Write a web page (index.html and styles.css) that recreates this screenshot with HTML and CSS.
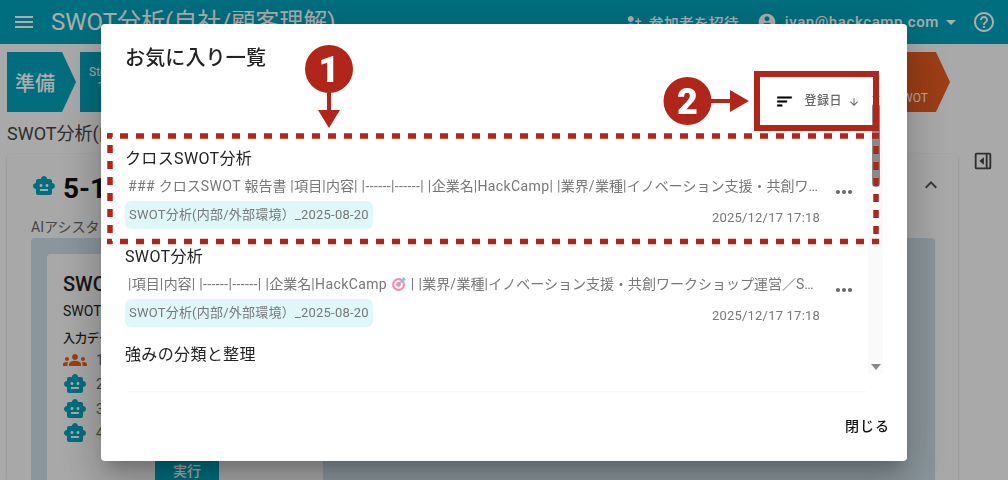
FILE: index.html
```html
<!DOCTYPE html>
<html lang="ja">
<head>
<meta charset="utf-8">
<title>お気に入り一覧</title>
<link rel="stylesheet" href="styles.css">
</head>
<body>
<div class="app">
  <header class="topbar">
    <svg class="ico menu-ico" viewBox="0 0 24 24"><path d="M3 18h18v-2H3v2zm0-5h18v-2H3v2zm0-7v2h18V6H3z"/></svg>
    <div class="app-title">SWOT分析(自社/顧客理解)</div>
    <div class="top-actions">
      <svg class="ico small-ico" viewBox="0 0 24 24"><path d="M15 12c2.21 0 4-1.79 4-4s-1.79-4-4-4-4 1.79-4 4 1.79 4 4 4zm-9-2V7H4v3H1v2h3v3h2v-3h3v-2H6zm9 4c-2.67 0-8 1.34-8 4v2h16v-2c0-2.66-5.33-4-8-4z"/></svg>
      <span class="invite">参加者を招待</span>
      <svg class="ico acct-ico" viewBox="0 0 24 24"><path d="M12 2C6.48 2 2 6.48 2 12s4.48 10 10 10 10-4.48 10-10S17.52 2 12 2zm0 3c1.66 0 3 1.34 3 3s-1.34 3-3 3-3-1.34-3-3 1.34-3 3-3zm0 14.2c-2.5 0-4.71-1.28-6-3.22.03-1.99 4-3.08 6-3.08 1.99 0 5.97 1.09 6 3.08-1.29 1.94-3.5 3.22-6 3.22z"/></svg>
      <span class="email">ivan@hackcamp.com</span>
      <svg class="ico caret-ico" viewBox="0 0 24 24"><path d="M7 10l5 5 5-5z"/></svg>
      <svg class="ico help-ico" viewBox="0 0 24 24"><path d="M11 18h2v-2h-2v2zm1-16C6.48 2 2 6.48 2 12s4.48 10 10 10 10-4.48 10-10S17.52 2 12 2zm0 18c-4.41 0-8-3.59-8-8s3.59-8 8-8 8 3.59 8 8-3.59 8-8 8zm0-14c-2.21 0-4 1.79-4 4h2c0-1.1.9-2 2-2s2 .9 2 2c0 2-3 1.75-3 5h2c0-2.25 3-2.5 3-5 0-2.21-1.79-4-4-4z"/></svg>
    </div>
  </header>

  <nav class="stepper">
    <div class="step step-first">準備</div>
    <div class="step step-mid"><span class="step-kicker">Step</span><span class="step-num">1</span></div>
    <div class="step step-last"><span class="step-label">SWOT</span></div>
  </nav>

  <div class="workspace">
    <div class="main-col">
      <div class="page-heading">SWOT分析(内部/外部環境)</div>
      <section class="card">
        <div class="card-head">
          <svg class="ico robot head-robot" viewBox="0 0 24 24"><path d="M20 9V7c0-1.1-.9-2-2-2h-3c0-1.66-1.34-3-3-3S9 3.34 9 5H6c-1.1 0-2 .9-2 2v2c-1.66 0-3 1.34-3 3s1.34 3 3 3v4c0 1.1.9 2 2 2h12c1.1 0 2-.9 2-2v-4c1.66 0 3-1.34 3-3s-1.34-3-3-3zM7.5 11.5c0-.83.67-1.5 1.5-1.5s1.5.67 1.5 1.5S9.83 13 9 13s-1.5-.67-1.5-1.5zM16 17H8v-2h8v2zm-1-4c-.83 0-1.5-.67-1.5-1.5S14.17 10 15 10s1.5.67 1.5 1.5S15.83 13 15 13z"/></svg>
          <div class="card-title">5-1 SWOT分析</div>
          <svg class="ico chevron" viewBox="0 0 24 24"><path d="M12 8l-6 6 1.41 1.41L12 10.83l4.59 4.58L18 14z"/></svg>
        </div>
        <div class="assistant-note">AIアシスタント</div>
        <div class="tool-panel">
          <div class="tool-card">
            <div class="tool-title">SWOT分析</div>
            <div class="tool-desc">SWOT分析を実施</div>
            <div class="input-label">入力データ</div>
            <div class="input-rows">
              <div class="input-row"><svg class="ico people" viewBox="0 0 24 24"><path d="M4 13c1.1 0 2-.9 2-2s-.9-2-2-2-2 .9-2 2 .9 2 2 2zm1.13 1.1c-.37-.06-.74-.1-1.13-.1-.99 0-1.93.21-2.78.58C.48 14.9 0 15.62 0 16.43V18h4.5v-1.61c0-.83.23-1.61.63-2.29zM20 13c1.1 0 2-.9 2-2s-.9-2-2-2-2 .9-2 2 .9 2 2 2zm4 3.43c0-.81-.48-1.53-1.22-1.85-.85-.37-1.79-.58-2.78-.58-.39 0-.76.04-1.13.1.4.68.63 1.46.63 2.29V18H24v-1.57zm-7.76-2.78c-1.17-.52-2.61-.9-4.24-.9-1.63 0-3.07.39-4.24.9C6.68 14.13 6 15.21 6 16.39V18h12v-1.61c0-1.18-.68-2.26-1.76-2.74zM12 12c1.66 0 3-1.34 3-3s-1.34-3-3-3-3 1.34-3 3 1.34 3 3 3z"/></svg><span>1</span></div>
              <div class="input-row"><svg class="ico robot" viewBox="0 0 24 24"><path d="M20 9V7c0-1.1-.9-2-2-2h-3c0-1.66-1.34-3-3-3S9 3.34 9 5H6c-1.1 0-2 .9-2 2v2c-1.66 0-3 1.34-3 3s1.34 3 3 3v4c0 1.1.9 2 2 2h12c1.1 0 2-.9 2-2v-4c1.66 0 3-1.34 3-3s-1.34-3-3-3zM7.5 11.5c0-.83.67-1.5 1.5-1.5s1.5.67 1.5 1.5S9.83 13 9 13s-1.5-.67-1.5-1.5zM16 17H8v-2h8v2zm-1-4c-.83 0-1.5-.67-1.5-1.5S14.17 10 15 10s1.5.67 1.5 1.5S15.83 13 15 13z"/></svg><span>2</span></div>
              <div class="input-row"><svg class="ico robot" viewBox="0 0 24 24"><path d="M20 9V7c0-1.1-.9-2-2-2h-3c0-1.66-1.34-3-3-3S9 3.34 9 5H6c-1.1 0-2 .9-2 2v2c-1.66 0-3 1.34-3 3s1.34 3 3 3v4c0 1.1.9 2 2 2h12c1.1 0 2-.9 2-2v-4c1.66 0 3-1.34 3-3s-1.34-3-3-3zM7.5 11.5c0-.83.67-1.5 1.5-1.5s1.5.67 1.5 1.5S9.83 13 9 13s-1.5-.67-1.5-1.5zM16 17H8v-2h8v2zm-1-4c-.83 0-1.5-.67-1.5-1.5S14.17 10 15 10s1.5.67 1.5 1.5S15.83 13 15 13z"/></svg><span>3</span></div>
              <div class="input-row"><svg class="ico robot" viewBox="0 0 24 24"><path d="M20 9V7c0-1.1-.9-2-2-2h-3c0-1.66-1.34-3-3-3S9 3.34 9 5H6c-1.1 0-2 .9-2 2v2c-1.66 0-3 1.34-3 3s1.34 3 3 3v4c0 1.1.9 2 2 2h12c1.1 0 2-.9 2-2v-4c1.66 0 3-1.34 3-3s-1.34-3-3-3zM7.5 11.5c0-.83.67-1.5 1.5-1.5s1.5.67 1.5 1.5S9.83 13 9 13s-1.5-.67-1.5-1.5zM16 17H8v-2h8v2zm-1-4c-.83 0-1.5-.67-1.5-1.5S14.17 10 15 10s1.5.67 1.5 1.5S15.83 13 15 13z"/></svg><span>4</span></div>
            </div>
            <div class="run-wrap"><button class="run-btn">実行</button></div>
          </div>
        </div>
      </section>
    </div>
    <aside class="side-rail">
      <svg class="ico rail-ico" viewBox="0 0 24 24"><path d="M3 5a2 2 0 0 1 2-2h14a2 2 0 0 1 2 2v14a2 2 0 0 1-2 2H5a2 2 0 0 1-2-2V5zm2 0v14h10V5H5zm12 0v14h2V5h-2zm-4 3v8l-5-4 5-4z" fill-rule="evenodd"/></svg>
    </aside>
  </div>
</div>

<div class="scrim"></div>

<div class="dialog" role="dialog">
  <h2 class="dialog-title">お気に入り一覧</h2>
  <div class="dialog-body">
    <div class="list-col">
      <div class="sort-row">
        <svg class="ico sort-ico" viewBox="0 0 24 24"><path d="M3 18h6v-2H3v2zM3 6v2h18V6H3zm0 7h12v-2H3v2z"/></svg>
        <span class="sort-label">登録日</span>
        <svg class="ico arrow-ico" viewBox="0 0 24 24"><path d="M20 12l-1.41-1.41L13 16.17V4h-2v12.17l-5.58-5.59L4 12l8 8 8-8z"/></svg>
      </div>
      <ul class="fav-list">
        <li class="fav-item">
          <div class="fav-title">クロスSWOT分析</div>
          <div class="fav-preview"><span class="lat">### </span>クロス<span class="lat">SWOT </span>報告書<span class="lat"> |</span>項目<span class="lat">|</span>内容<span class="lat">| |------|------| |</span>企業名<span class="lat">|HackCamp| |</span>業界<span class="lat">/</span>業種<span class="lat">|</span>イノベーション支援・共創ワークショップ運営／SWOT</div>
          <svg class="ico dots" viewBox="0 0 24 24"><path d="M6 10c-1.1 0-2 .9-2 2s.9 2 2 2 2-.9 2-2-.9-2-2-2zm12 0c-1.1 0-2 .9-2 2s.9 2 2 2 2-.9 2-2-.9-2-2-2zm-6 0c-1.1 0-2 .9-2 2s.9 2 2 2 2-.9 2-2-.9-2-2-2z"/></svg>
          <div class="fav-meta"><span class="chip">SWOT分析(内部/外部環境）_2025-08-20</span><span class="fav-date">2025/12/17 17:18</span></div>
        </li>
        <li class="fav-item">
          <div class="fav-title">SWOT分析</div>
          <div class="fav-preview"><span class="lat">|</span>項目<span class="lat">|</span>内容<span class="lat">| |------|------| |</span>企業名<span class="lat">|HackCamp </span><svg class="emoji" viewBox="0 0 16 16"><circle cx="7.5" cy="8.5" r="6.5" fill="#f08fa8"/><circle cx="7.5" cy="8.5" r="4.3" fill="#fff"/><circle cx="7.5" cy="8.5" r="2.4" fill="#f08fa8"/><path d="M7.5 8.5L13.5 2.5" stroke="#7bb8e8" stroke-width="1.4"/><path d="M12 1l3 3-2 .5-1.5-1.5z" fill="#7bb8e8"/></svg><span class="lat"> | |</span>業界<span class="lat">/</span>業種<span class="lat">|</span>イノベーション支援・共創ワークショップ運営／SWOT分析</div>
          <svg class="ico dots" viewBox="0 0 24 24"><path d="M6 10c-1.1 0-2 .9-2 2s.9 2 2 2 2-.9 2-2-.9-2-2-2zm12 0c-1.1 0-2 .9-2 2s.9 2 2 2 2-.9 2-2-.9-2-2-2zm-6 0c-1.1 0-2 .9-2 2s.9 2 2 2 2-.9 2-2-.9-2-2-2z"/></svg>
          <div class="fav-meta"><span class="chip">SWOT分析(内部/外部環境）_2025-08-20</span><span class="fav-date">2025/12/17 17:18</span></div>
        </li>
        <li class="fav-item">
          <div class="fav-title">強みの分類と整理</div>
        </li>
      </ul>
    </div>
    <div class="scrollbar">
      <span class="sb-up"></span>
      <span class="sb-thumb"></span>
      <span class="sb-down"></span>
    </div>
  </div>
  <div class="dialog-actions"><button class="close-btn">閉じる</button></div>
</div>

<svg class="annotations" viewBox="0 0 1008 480">
  <path class="dash dash-h" d="M107 136H879"/>
  <path class="dash dash-h" d="M107 241.5H879"/>
  <path class="dash dash-l" d="M110 133V244"/>
  <path class="dash dash-r" d="M876 133V244"/>
  <rect class="box" x="757" y="74" width="119" height="54"/>
  <circle class="badge" cx="329" cy="69" r="24"/>
  <text class="badge-num" x="329" y="82">1</text>
  <path class="arrow-line" d="M329 90V112"/>
  <path class="arrow-head" d="M318 110H340L329 128Z"/>
  <circle class="badge" cx="687.5" cy="101" r="24"/>
  <text class="badge-num" x="687.5" y="113.5">2</text>
  <path class="arrow-line" d="M709 101H732"/>
  <path class="arrow-head" d="M730 90V112L749 101Z"/>
</svg>
</body>
</html>
```

FILE: styles.css
```css
* { box-sizing: border-box; }
html, body { margin: 0; height: 100%; }
body {
  width: 1008px;
  height: 480px;
  overflow: hidden;
  background: #fafafa;
  font-family: Roboto, "Noto Sans CJK JP", sans-serif;
  color: #222;
}
.ico { display: block; fill: currentColor; flex: none; }

.app { display: flex; flex-direction: column; height: 480px; }

.topbar {
  height: 44px;
  flex: none;
  display: flex;
  align-items: center;
  padding: 0 12px;
  background: #00a3ba;
  color: #fff;
}
.menu-ico { width: 24px; height: 24px; }
.app-title { margin-left: 15px; font-size: 24px; line-height: 30px; }
.top-actions { margin-left: auto; display: flex; align-items: center; }
.small-ico { width: 18px; height: 18px; transform: scaleX(-1); }
.invite { margin-left: 7px; font-size: 15px; font-weight: 500; }
.acct-ico { width: 20px; height: 20px; margin-left: 18px; }
.email { margin-left: 8px; font-size: 15px; font-weight: 500; letter-spacing: .6px; }
.caret-ico { width: 24px; height: 24px; }
.help-ico { width: 24px; height: 24px; margin-left: 9px; }

.stepper { display: flex; gap: 4px; padding: 8px 58px 0 7px; height: 68px; flex: none; }
.step {
  height: 60px;
  color: #fff;
  display: flex;
  clip-path: polygon(0 0, calc(100% - 14px) 0, 100% 50%, calc(100% - 14px) 100%, 0 100%);
}
.step-first { width: 69px; background: #00a3ba; font-size: 20px; font-weight: 500; align-items: center; padding-left: 8px; }
.step-mid { flex: 1; background: #00a3ba; flex-direction: column; padding: 12px 0 0 9px; font-size: 12px; line-height: 16px; }
.step-num { font-size: 16px; margin-left: 8px; }
.step-last { width: 120px; background: #e65c20; align-items: flex-end; justify-content: flex-end; padding: 0 22px 7px 0; font-size: 12px; }

.workspace { flex: 1; display: flex; min-height: 0; }
.main-col { flex: 1; min-width: 0; padding-left: 7px; display: flex; flex-direction: column; }
.page-heading { font-size: 18px; line-height: 24px; margin-top: 10px; color: #444; height: 32px; white-space: nowrap; }
.card {
  flex: 1;
  background: #f8f8f8;
  border-radius: 4px 4px 0 0;
  padding: 20px 23px 0 24px;
  box-shadow: 0 1px 3px rgba(0,0,0,.2);
  display: flex;
  flex-direction: column;
  min-height: 0;
}
.card-head { display: flex; align-items: center; height: 24px; }
.robot { color: #00a3ba; }
.head-robot { width: 24px; height: 24px; margin-left: 1px; }
.card-title { margin-left: 7px; font-size: 28px; font-weight: 700; color: #111; white-space: nowrap; }
.chevron { margin-left: auto; width: 24px; height: 24px; color: #555; margin-top: -3px; margin-right: -8px; }
.assistant-note { margin-top: 19px; font-size: 14px; line-height: 20px; color: #666; }
.tool-panel { flex: 1; margin-top: 1px; background: #ccdde6; border-radius: 4px 4px 0 0; padding: 16px; min-height: 0; }
.tool-card { width: 276px; height: 240px; background: #f8f8f8; border-radius: 4px 4px 0 0; padding: 18px 16px; position: relative; }
.tool-title { font-size: 20px; font-weight: 500; line-height: 24px; }
.tool-desc { font-size: 14px; line-height: 20px; margin-top: 5px; }
.input-label { font-size: 12px; line-height: 18px; margin-top: 9px; font-weight: 500; }
.input-rows { display: flex; flex-direction: column; }
.input-row { display: flex; align-items: center; height: 24px; gap: 9px; font-size: 14px; color: #666; }
.input-row + .input-row { margin-top: .3px; }
.input-row .ico { width: 24px; height: 24px; }
.people { color: #e06020; }
.run-wrap { padding-left: 92px; margin-top: 15px; }
.run-btn { width: 64px; height: 40px; border: 0; background: #00a3ba; color: #fff; font: 500 14px Roboto, "Noto Sans CJK JP", sans-serif; border-radius: 2px; padding: 0 0 20px; }

.side-rail { width: 50px; flex: none; padding: 38px 0 0 15px; }
.rail-ico { width: 22px; height: 22px; margin-left: -1px; color: #444; }

.scrim { position: fixed; inset: 0; background: rgba(0,0,0,.32); }

.dialog {
  position: fixed;
  left: 101px;
  top: 24px;
  width: 806px;
  height: 437px;
  background: #fff;
  border-radius: 4px;
  display: flex;
  flex-direction: column;
  padding: 0 24px;
  box-shadow: 0 11px 15px -7px rgba(0,0,0,.2), 0 24px 38px 3px rgba(0,0,0,.14), 0 9px 46px 8px rgba(0,0,0,.12);
}
.dialog-title { margin: 20px 0 0; font-size: 20px; line-height: 28px; font-weight: 500; letter-spacing: .15px; color: #222; height: 40px; flex: none; }
.dialog-body { display: flex; height: 307px; flex: none; }
.list-col { flex: 1; min-width: 0; display: flex; flex-direction: column; box-shadow: 0 2px 3px -2px rgba(0,0,0,.08); overflow: hidden; }
.sort-row { flex: none; display: flex; align-items: center; justify-content: flex-end; height: 36px; padding-right: 8px; margin-bottom: 27px; }
.sort-ico { width: 19px; height: 19px; color: #000; margin-right: 10px; margin-top: -2px; stroke: #000; stroke-width: .6; }
.sort-label { font-size: 12px; font-weight: 500; color: #666; letter-spacing: .5px; line-height: 14px; margin-top: -2px; }
.arrow-ico { width: 12px; height: 12px; margin-left: 6px; color: #666; margin-top: -1px; }

.fav-list { list-style: none; margin: 0; padding: 0; }
.fav-item {
  display: grid;
  grid-template-columns: 1fr 48px;
  grid-template-rows: 24px 20px 28px;
  row-gap: 5px;
  height: 98px;
}
.fav-title { grid-column: 1 / 3; font-size: 16px; line-height: 24px; letter-spacing: .35px; color: #222; }
.fav-preview {
  grid-column: 1;
  padding-left: 3px;
  font-size: 14px;
  line-height: 20px;
  color: #777;
  white-space: nowrap;
  overflow: hidden;
  text-overflow: ellipsis;
}
.lat { letter-spacing: .38px; }
.emoji { width: 16px; height: 16px; vertical-align: -3px; }
.dots { grid-column: 2; width: 24px; height: 24px; justify-self: center; margin-top: 4px; color: #666; }
.fav-meta { grid-column: 1; display: flex; align-items: center; justify-content: space-between; }
.chip { height: 28px; line-height: 28px; padding: 0 4px; background: #e0f7fa; border-radius: 6px; font-size: 13px; letter-spacing: .22px; color: #777; white-space: nowrap; }
.fav-date { font-size: 13px; letter-spacing: .2px; color: #777; padding-top: 5px; }

.scrollbar { width: 15px; flex: none; background: #fafafa; display: flex; flex-direction: column; align-items: center; height: 290px; }
.sb-up { margin-top: 8px; width: 0; height: 0; border: 4px solid transparent; border-top: 0; border-bottom: 5px solid #8a8a8a; }
.sb-thumb { width: 8px; height: 84px; margin-top: 6px; background: #8a8a8a; border-radius: 4px; }
.sb-down { margin-top: auto; margin-bottom: 4px; width: 0; height: 0; border: 5px solid transparent; border-bottom: 0; border-top: 6px solid #8a8a8a; }

.dialog-actions { flex: 1; display: flex; justify-content: flex-end; align-items: center; padding-bottom: 2px; margin-right: -7px; }
.close-btn { border: 0; background: none; padding: 0; font: 500 14px Roboto, "Noto Sans CJK JP", sans-serif; letter-spacing: 1px; color: #111; }

.annotations { position: fixed; left: 0; top: 0; width: 1008px; height: 480px; pointer-events: none; }
.dash { fill: none; stroke: #b1261b; stroke-width: 5.5; stroke-dasharray: 8 8; }
.dash-h { stroke-dashoffset: 3; }
.dash-l { stroke-dashoffset: 4; }
.dash-r { stroke-dashoffset: 3; }
.box { fill: none; stroke: #b1261b; stroke-width: 6; }
.badge { fill: #b1261b; }
.badge-num { fill: #fff; font-family: Roboto, sans-serif; font-size: 36px; font-weight: 900; text-anchor: middle; }
.arrow-line { stroke: #b1261b; stroke-width: 4; fill: none; }
.arrow-head { fill: #b1261b; }
```
